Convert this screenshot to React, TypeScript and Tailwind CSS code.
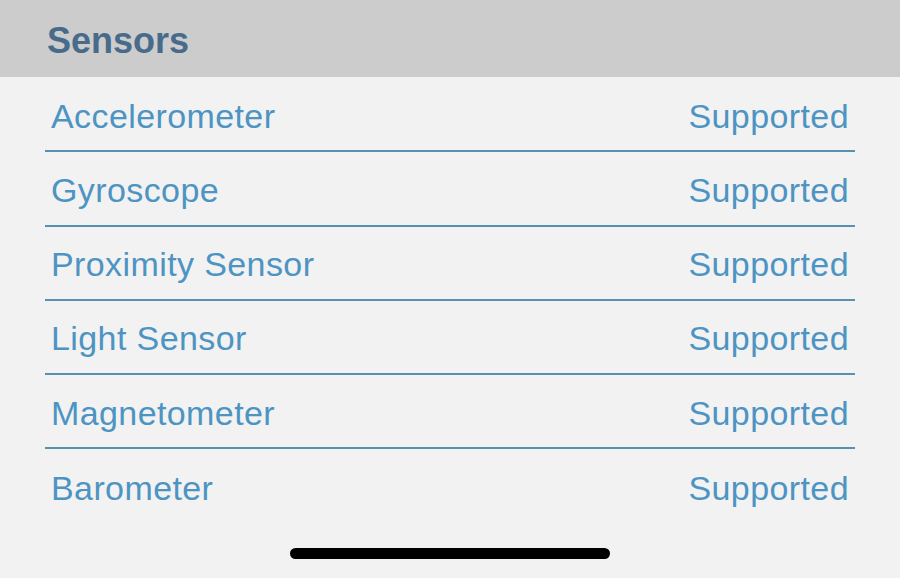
import React from "react";

const rows = [
  "Accelerometer",
  "Gyroscope",
  "Proximity Sensor",
  "Light Sensor",
  "Magnetometer",
  "Barometer",
];

export default function App() {
  return (
    <div
      className="w-[900px] h-[578px] bg-[#f2f2f2] flex flex-col overflow-hidden"
      style={{ fontFamily: '"Liberation Sans", Arial, sans-serif' }}
    >
      <div className="h-[77px] shrink-0 bg-[#cccccc] flex items-center pl-[47px]">
        <span className="text-[36px] font-bold text-[#486b8b] leading-none pt-[4px]">
          Sensors
        </span>
      </div>
      <div className="px-[45px] pt-[1px]">
        {rows.map((r, i) => (
          <div
            key={r}
            className={`h-[74.25px] flex items-center justify-between px-[6px] text-[34px] tracking-[0.4px] text-[#4d94c3] ${
              i < rows.length - 1 ? "border-b-2 border-[#5990b0]" : ""
            }`}
          >
            <span className="leading-none pt-[3px]">{r}</span>
            <span className="leading-none pt-[3px]">Supported</span>
          </div>
        ))}
      </div>
      <div className="mt-auto mb-[19px] mx-auto w-[320px] h-[11px] rounded-full bg-black" />
    </div>
  );
}
